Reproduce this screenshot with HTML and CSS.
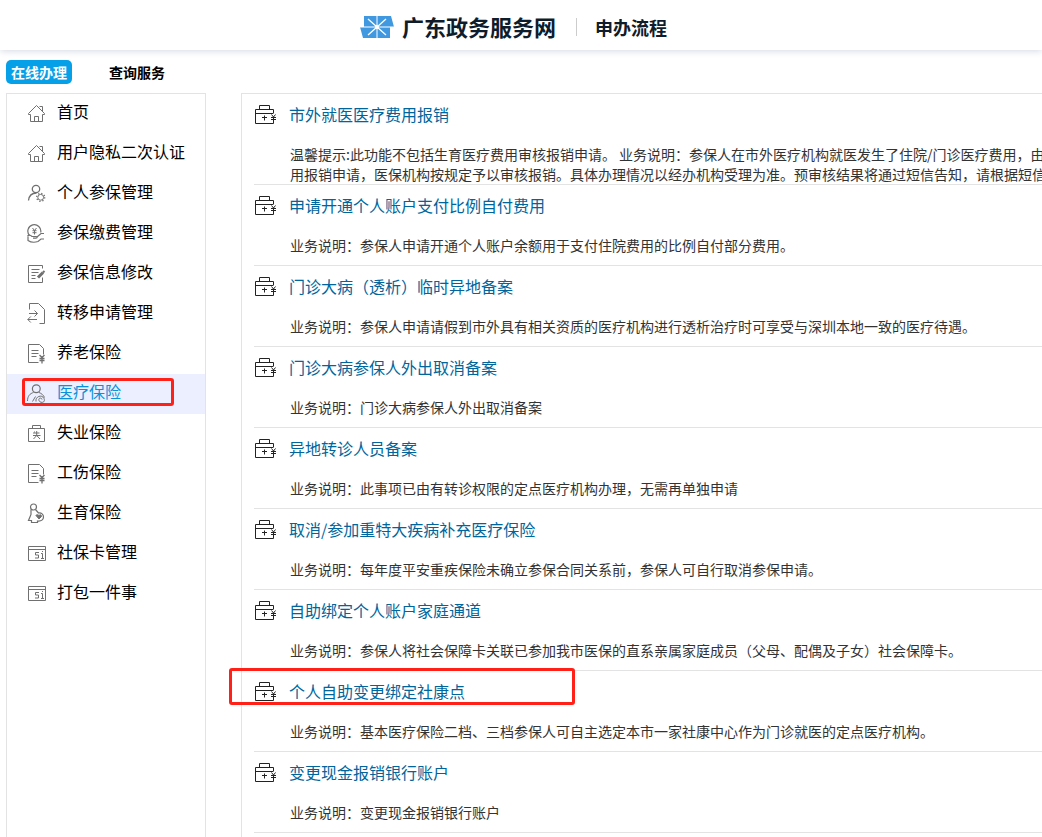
FILE: index.html
```html
<!DOCTYPE html>
<html lang="zh-CN">
<head>
<meta charset="utf-8">
<title>广东政务服务网</title>
<link rel="stylesheet" href="styles.css">
</head>
<body>
<svg class="sprite" aria-hidden="true">
  <symbol id="home" viewBox="0 -2 20 24"><path d="M1.500 10.500V9.500L9.500 1.500 17.500 9.500v1M1.500 10.500h2v7h12v-7h2M7.500 17.500v-5h4v5M12.500 2.500h3v5"/></symbol>
  <symbol id="user-gear" viewBox="0 -2 20 24"><circle cx="9" cy="5" r="3.700" stroke-width="1.300"/><path d="M1.500 16.500C2 12 5 9 9.500 9" stroke-width="1.300"/><circle cx="13.700" cy="13.300" r="2.900"/><circle cx="13.700" cy="13.300" r="4" stroke-width="1.300" stroke-dasharray="1.300 1.842"/></symbol>
  <symbol id="pay" viewBox="0 -2 20 24"><path d="M2.500 11.500A6.500 6.500 0 1 1 13.700 8.500" stroke-width="1.200"/><path d="M5.500 4l2 2.500 2-2.500M7.500 6.500v4M5.500 6.700h4M5.500 8.700h4"/><path d="M.5 12c1.500-1.500 3-1 4.500.5h4c1.500 0 1.500 1.700 0 1.700H6M10 13l4-3.500h3M1 12.500v4c3 2 7 2 10 1l3-2.500h3" stroke-width="1.200"/></symbol>
  <symbol id="edit" viewBox="0 -2 20 24"><path d="M15.500 4.500v-3h-14v17h14v-5M4.500 5.500h8M4.500 8.500h7M4.500 11.500h4M4.500 14.500h4"/><path d="M11 13.500l5-5" stroke-width="3"/><path d="M16 8.500l1.500-1.500" stroke-width="2"/></symbol>
  <symbol id="transfer" viewBox="0 -2 20 24"><path d="M2.500 5.500v-6h9l6 6v14h-5M2 9.500h8.500M7.500 6.500l3 3-3 3M10 15.500H.8M3.800 12.500l-3 3 3 3"/></symbol>
  <symbol id="doc-yen" viewBox="0 -2 20 24"><path d="M11.500 18.500h-10V.5h11l4 4v6M4.500 6.500h7M4.500 9.500h7M4.500 12.500h5"/><path d="M12.500 11l2.500 2.500 2.500-2.500M15 13v6.500M12.500 14.500h5M12.500 16.500h5" stroke-width="1.300"/></symbol>
  <symbol id="medical" viewBox="0 -2 20 24"><circle cx="9.300" cy="4.700" r="3.900" stroke-width="1.200"/><path d="M.5 17c0-5 2.500-7.500 6-8.500M12 8.500c2.500 1 4.500 2.500 5.500 5M5.500 17.500l3-5M9 17.500c-1-5 6-7.500 8-3s-4 5-5 2 3-3 3-1"/></symbol>
  <symbol id="jobless" viewBox="0 -2 20 24"><path d="M1.500 4.500h16v13h-16zM5.500 4.500v-3h8v3"/><path d="M7.500 7.500l-1 2M7 9h5.500M6 11.500h7.500M9.700 7v4.500L6.500 15M9.700 11.500L13 15"/></symbol>
  <symbol id="birth" viewBox="0 -2 20 24"><circle cx="6.500" cy="3" r="3" stroke-width="1.200"/><path d="M4 5.500v5l-2.500 6h3v2h6v-1.500c4 .5 6-1.500 6-4s-2-4.500-5-4L8.500 5.500" stroke-width="1.200"/><path d="M9 11.500l3 3.500 2.500-2.500c0-2-1.500-2-2.500-1-1-1-3-1-3 0z" fill="#707070"/></symbol>
  <symbol id="card" viewBox="0 -2 20 24"><path d="M1.500 2.500h17v14h-17zM1.500 5.500h17"/><path d="M12 8.500H8.500v2.500h3v3H8M14 9.500h1.500v4.500M14 14.500h3M15 7.500h1"/></symbol>
  <symbol id="case" viewBox="0 0 24 22"><path d="M19.500 9V5.500h-18v14h18v-2M1.500 9.500h18M5.500 5.500v-4h10v4M10.500 11.500v5M8 13.500h5M17.500 10.500l2 2.500 2-2.500M19.500 13v5M17 13.500h5M17 15.500h5"/></symbol>
</svg>

<header class="header">
  <svg class="logo" viewBox="0 0 34 22" aria-hidden="true">
    <path fill="#4098e0" d="M4 0h27l3 11h-4v11H3L0 11h4z"/>
    <path stroke="#fff" stroke-width="1" d="M17 0v22M0 11h34"/>
    <path stroke="#fff" stroke-width="1.300" d="M8 3l18 16M26 3L8 19"/>
    <circle cx="17" cy="11" r="2" fill="#fff"/>
  </svg>
  <h1 class="site-name">广东政务服务网</h1>
  <span class="page-name">申办流程</span>
</header>

<nav class="tabs">
  <button class="tab tab-active" type="button">在线办理</button>
  <button class="tab" type="button">查询服务</button>
</nav>

<main class="main">
  <nav class="sidebar">
    <a class="menu-item" href="#"><svg class="menu-icon"><use href="#home"/></svg><span class="menu-label">首页</span></a>
    <a class="menu-item" href="#"><svg class="menu-icon"><use href="#home"/></svg><span class="menu-label">用户隐私二次认证</span></a>
    <a class="menu-item" href="#"><svg class="menu-icon"><use href="#user-gear"/></svg><span class="menu-label">个人参保管理</span></a>
    <a class="menu-item" href="#"><svg class="menu-icon"><use href="#pay"/></svg><span class="menu-label">参保缴费管理</span></a>
    <a class="menu-item" href="#"><svg class="menu-icon"><use href="#edit"/></svg><span class="menu-label">参保信息修改</span></a>
    <a class="menu-item" href="#"><svg class="menu-icon"><use href="#transfer"/></svg><span class="menu-label">转移申请管理</span></a>
    <a class="menu-item" href="#"><svg class="menu-icon"><use href="#doc-yen"/></svg><span class="menu-label">养老保险</span></a>
    <a class="menu-item menu-active" href="#"><svg class="menu-icon"><use href="#medical"/></svg><span class="menu-label">医疗保险</span><span class="mark mark-menu"></span></a>
    <a class="menu-item" href="#"><svg class="menu-icon"><use href="#jobless"/></svg><span class="menu-label">失业保险</span></a>
    <a class="menu-item" href="#"><svg class="menu-icon"><use href="#doc-yen"/></svg><span class="menu-label">工伤保险</span></a>
    <a class="menu-item" href="#"><svg class="menu-icon"><use href="#birth"/></svg><span class="menu-label">生育保险</span></a>
    <a class="menu-item" href="#"><svg class="menu-icon"><use href="#card"/></svg><span class="menu-label">社保卡管理</span></a>
    <a class="menu-item" href="#"><svg class="menu-icon"><use href="#card"/></svg><span class="menu-label">打包一件事</span></a>
  </nav>

  <ul class="services">
    <li class="service"><a class="service-title" href="#"><svg class="case-icon"><use href="#case"/></svg>市外就医医疗费用报销</a>
      <p class="service-desc">温馨提示:此功能不包括生育医疗费用审核报销申请。 业务说明：参保人在市外医疗机构就医发生了住院/门诊医疗费用，由<br>用报销申请，医保机构按规定予以审核报销。具体办理情况以经办机构受理为准。预审核结果将通过短信告知，请根据短信</p></li>
    <li class="service"><a class="service-title" href="#"><svg class="case-icon"><use href="#case"/></svg>申请开通个人账户支付比例自付费用</a>
      <p class="service-desc">业务说明：参保人申请开通个人账户余额用于支付住院费用的比例自付部分费用。</p></li>
    <li class="service"><a class="service-title" href="#"><svg class="case-icon"><use href="#case"/></svg>门诊大病（透析）临时异地备案</a>
      <p class="service-desc">业务说明：参保人申请请假到市外具有相关资质的医疗机构进行透析治疗时可享受与深圳本地一致的医疗待遇。</p></li>
    <li class="service"><a class="service-title" href="#"><svg class="case-icon"><use href="#case"/></svg>门诊大病参保人外出取消备案</a>
      <p class="service-desc">业务说明：门诊大病参保人外出取消备案</p></li>
    <li class="service"><a class="service-title" href="#"><svg class="case-icon"><use href="#case"/></svg>异地转诊人员备案</a>
      <p class="service-desc">业务说明：此事项已由有转诊权限的定点医疗机构办理，无需再单独申请</p></li>
    <li class="service"><a class="service-title" href="#"><svg class="case-icon"><use href="#case"/></svg>取消/参加重特大疾病补充医疗保险</a>
      <p class="service-desc">业务说明：每年度平安重疾保险未确立参保合同关系前，参保人可自行取消参保申请。</p></li>
    <li class="service"><a class="service-title" href="#"><svg class="case-icon"><use href="#case"/></svg>自助绑定个人账户家庭通道</a>
      <p class="service-desc">业务说明：参保人将社会保障卡关联已参加我市医保的直系亲属家庭成员（父母、配偶及子女）社会保障卡。</p></li>
    <li class="service"><a class="service-title" href="#"><svg class="case-icon"><use href="#case"/></svg>个人自助变更绑定社康点</a>
      <p class="service-desc">业务说明：基本医疗保险二档、三档参保人可自主选定本市一家社康中心作为门诊就医的定点医疗机构。</p><span class="mark mark-service"></span></li>
    <li class="service"><a class="service-title" href="#"><svg class="case-icon"><use href="#case"/></svg>变更现金报销银行账户</a>
      <p class="service-desc">业务说明：变更现金报销银行账户</p></li>
  </ul>
</main>
</body>
</html>
```

FILE: styles.css
```css
* { box-sizing: border-box; }

body {
  margin: 0;
  min-height: 100vh;
  display: flex;
  flex-direction: column;
  overflow-x: hidden;
  background: #fff;
  color: #000;
  font-family: "Noto Sans CJK SC", sans-serif;
  font-size: 16px;
}

a { color: inherit; text-decoration: none; }

svg { fill: none; flex: none; }

.sprite { position: absolute; width: 0; height: 0; }

.header {
  height: 50px;
  padding: 3px 15px 0 0;
  display: flex;
  align-items: center;
  justify-content: center;
  color: #0f1c2b;
  box-shadow: 0 1px 7px #d4d8e4;
}

.logo { width: 34px; height: 22px; margin-right: 8px; }

.site-name {
  margin: 0;
  padding-bottom: 2px;
  font-size: 22px;
  line-height: 30px;
  font-weight: 700;
}

.page-name {
  margin-left: 20px;
  padding-left: 18px;
  border-left: 1px solid #ccc;
  font-size: 18px;
  line-height: 18px;
  font-weight: 700;
}

.tabs {
  height: 43px;
  padding: 10px 6px 0;
  display: flex;
  align-items: flex-start;
  gap: 32px;
}

.tab {
  height: 24px;
  padding: 0 5px;
  border: 0;
  border-radius: 5px;
  background: none;
  color: #000;
  font: 700 14px/24px "Noto Sans CJK SC", sans-serif;
}

.tab-active { background: #06a0e9; color: #fff; }

.main {
  flex: 1;
  padding-left: 6px;
  display: flex;
  gap: 35px;
}

.sidebar {
  width: 200px;
  flex: none;
  border: 1px solid #e3e3e3;
  border-bottom: 0;
}

.menu-item {
  position: relative;
  height: 40px;
  padding-left: 20px;
  display: flex;
  align-items: center;
  gap: 10px;
}

.menu-icon { width: 20px; height: 24px; stroke: #707070; }

.menu-label { line-height: 24px; padding-bottom: 6px; }

.menu-active { background: #ebefff; color: #0a92d8; }

.services {
  flex: 1;
  min-width: 0;
  margin: 0;
  padding: 0 0 0 12px;
  list-style: none;
  border-top: 1px solid #e3e3e3;
  border-left: 1px solid #e3e3e3;
}

.service { position: relative; border-bottom: 1px solid #e3e3e3; }

.service-title {
  height: 50px;
  padding-top: 10px;
  display: flex;
  align-items: flex-start;
  gap: 11px;
  color: #00659b;
  line-height: 20px;
}

.case-icon { width: 24px; height: 22px; stroke: #222; }

.service-desc {
  margin: 0;
  min-height: 30px;
  padding-left: 36px;
  color: #333;
  font-size: 14px;
  line-height: 20px;
  white-space: nowrap;
  overflow: hidden;
}

/* Red highlight frames laid over the content */
.mark {
  position: absolute;
  border: 3px solid #ff2018;
  border-radius: 3px;
  pointer-events: none;
}

.mark-menu { left: 15px; top: 4px; width: 152px; height: 28px; }

.mark-service { left: -25px; top: -3px; width: 346px; height: 37px; }
```
